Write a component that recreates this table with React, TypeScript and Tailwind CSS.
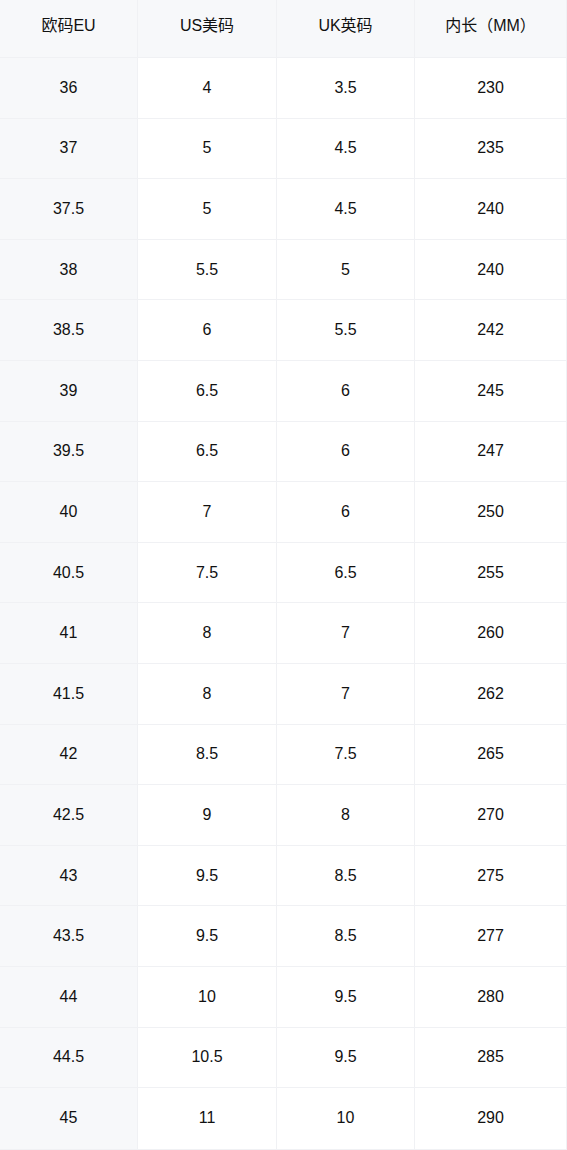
const header = ["欧码EU", "US美码", "UK英码", "内长（MM）"];

const rows: [string, string, string, string][] = [
  ["36", "4", "3.5", "230"],
  ["37", "5", "4.5", "235"],
  ["37.5", "5", "4.5", "240"],
  ["38", "5.5", "5", "240"],
  ["38.5", "6", "5.5", "242"],
  ["39", "6.5", "6", "245"],
  ["39.5", "6.5", "6", "247"],
  ["40", "7", "6", "250"],
  ["40.5", "7.5", "6.5", "255"],
  ["41", "8", "7", "260"],
  ["41.5", "8", "7", "262"],
  ["42", "8.5", "7.5", "265"],
  ["42.5", "9", "8", "270"],
  ["43", "9.5", "8.5", "275"],
  ["43.5", "9.5", "8.5", "277"],
  ["44", "10", "9.5", "280"],
  ["44.5", "10.5", "9.5", "285"],
  ["45", "11", "10", "290"],
];

export default function App() {
  return (
    <div
      className="w-[567px] bg-white text-[16px] text-[#111]"
      style={{ fontFamily: '"Liberation Sans", "Noto Sans CJK SC", sans-serif' }}
    >
      <div className="border-r border-b border-[#f0f1f4]">
        {/* header */}
        <div className="grid grid-cols-[138px_139px_138px_1fr] h-[58px] bg-[#f7f8fa] border-b border-[#f0f1f4]">
          {header.map((h, i) => (
            <div
              key={h}
              className={`flex justify-center pt-[14px] ${i < 3 ? "border-r border-[#f0f1f4]" : ""}`}
            >
              {h}
            </div>
          ))}
        </div>
        {rows.map((r, ri) => (
          <div
            key={r[0]}
            className={`grid grid-cols-[138px_139px_138px_1fr] h-[60.6px] ${
              ri < rows.length - 1 ? "border-b border-[#f0f1f4]" : ""
            }`}
          >
            {r.map((c, i) => (
              <div
                key={i}
                className={`flex items-center justify-center ${i === 0 ? "bg-[#f7f8fa]" : ""} ${
                  i < 3 ? "border-r border-[#f0f1f4]" : ""
                }`}
              >
                {c}
              </div>
            ))}
          </div>
        ))}
      </div>
    </div>
  );
}
